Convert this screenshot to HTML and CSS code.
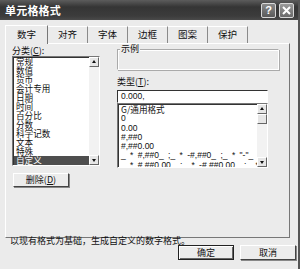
FILE: index.html
```html
<!DOCTYPE html>
<html lang="zh">
<head>
<meta charset="utf-8">
<title>单元格格式</title>
<link rel="stylesheet" href="styles.css">
</head>
<body>
<div class="window">
  <div class="titlebar">
    <span class="title">单元格格式</span>
    <div class="tbtns">
      <span class="tbtn">?</span>
      <span class="tbtn tclose">
        <svg width="11" height="11" viewBox="0 0 11 11"><path d="M2 2 L9 9 M9 2 L2 9" stroke="#fff" stroke-width="2"/></svg>
      </span>
    </div>
  </div>
  <div class="body">
    <div class="tabs">
      <span class="tab active">数字</span>
      <span class="tab">对齐</span>
      <span class="tab">字体</span>
      <span class="tab">边框</span>
      <span class="tab">图案</span>
      <span class="tab">保护</span>
    </div>
    <div class="panel">
      <div class="cols">
        <div class="left">
          <div class="label">分类(<u>C</u>):</div>
          <div class="listbox cat">
            <ul class="items">
              <li>常规</li><li>数值</li><li>货币</li><li>会计专用</li><li>日期</li><li>时间</li>
              <li>百分比</li><li>分数</li><li>科学记数</li><li>文本</li><li>特殊</li><li class="sel">自定义</li>
            </ul>
            <div class="sbar">
              <span class="arrow up"></span>
              <span class="track"></span>
              <span class="arrow down"></span>
            </div>
          </div>
          <button class="btn del">删除(<u>D</u>)</button>
        </div>
        <div class="right">
          <div class="sample"><span class="legend">示例</span></div>
          <div class="label type">类型(<u>T</u>):</div>
          <div class="input">0.000,</div>
          <div class="listbox types">
            <ul class="items mono">
              <li class="focus">G/通用格式</li>
              <li>0</li>
              <li>0.00</li>
              <li>#,##0</li>
              <li>#,##0.00</li>
              <li>_ * #,##0_ ;_ * -#,##0_ ;_ * "-"_ ;_ @_</li>
              <li>_ * #,##0.00_ ;_ * -#,##0.00_ ;_ * "-"??_ ;_ @_</li>
            </ul>
            <div class="sbar">
              <span class="arrow up"></span>
              <span class="thumb"></span>
              <span class="track"></span>
              <span class="arrow down"></span>
            </div>
          </div>
        </div>
      </div>
      <p class="desc">以现有格式为基础，生成自定义的数字格式。</p>
    </div>
    <div class="footer">
      <button class="btn ok">确定</button>
      <button class="btn">取消</button>
    </div>
  </div>
</div>
</body>
</html>
```

FILE: styles.css
```css
* { box-sizing: border-box; }
html, body { margin: 0; padding: 0; }
body {
  width: 300px; height: 269px; overflow: hidden;
  font-family: "Noto Sans CJK SC", "Liberation Sans", sans-serif;
  font-size: 9px; color: #111;
  background: #e9e9e9;
}
.window {
  width: 300px; height: 269px;
  background: #ebebeb;
  border-right: 2px solid #555;
  display: flex; flex-direction: column;
}
.titlebar {
  height: 20px;
  background: linear-gradient(#5c5c5c, #353535 35%, #3c3c3c 80%, #4a4a4a);
  display: flex; align-items: center; justify-content: space-between;
  padding: 0 4px 0 5px;
}
.title { color: #fff; font-size: 11px; font-weight: bold; letter-spacing: 0.2px; line-height: 1; }
.tbtns { display: flex; gap: 3px; }
.tbtn {
  width: 15px; height: 15px;
  border: 1px solid #d8d8d8; border-radius: 2px;
  background: linear-gradient(#8a8a8a, #5a5a5a);
  color: #fff; font: bold 11px "Liberation Sans", sans-serif;
  display: flex; align-items: center; justify-content: center;
}
.tclose { background: linear-gradient(#9a9a9a, #6a6a6a); }
.body { flex: 1; padding: 4px 8px 0 5px; display: flex; flex-direction: column; }
.tabs { display: flex; height: 19px; align-items: flex-end; }
.tab {
  width: 40px; height: 17px;
  display: flex; align-items: center; justify-content: center;
  border-right: 1px solid #8a8a8a; border-top: 1px solid #fff;
  font-size: 9.5px; padding-bottom: 2px;
}
.tab.active {
  width: 43px; height: 19px; background: #ebebeb;
  border-left: 1px solid #fff; border-right: 1px solid #777;
  margin-bottom: -1px; position: relative; z-index: 1;
}
.panel {
  height: 195px;
  border: 1px solid; border-color: #fff #777 #777 #fff;
  padding: 2px 0 0 6px;
  display: flex; flex-direction: column;
}
.cols { display: flex; gap: 17px; }
.left { width: 88px; display: flex; flex-direction: column; }
.right { width: 162px; display: flex; flex-direction: column; }
.label { height: 9px; line-height: 9px; margin-bottom: 1px; white-space: nowrap; }
.listbox {
  display: flex; background: #fff;
  border: 1px solid; border-color: #777 #fff #fff #777;
  box-shadow: inset 1px 1px 0 #333;
}
.cat { height: 110px; }
.items { list-style: none; margin: 0; padding: 1px 0 0 1px; flex: 1; overflow: hidden; min-width: 0; }
.cat .items { padding-top: 0; }
.items li { height: 9px; line-height: 9px; padding-left: 2px; white-space: nowrap; font-size: 8.6px; }
.items li.sel { background: #4e4e4e; color: #fff; }
.sbar { width: 10px; flex: none; display: flex; flex-direction: column; background: #f2f2f2; }
.sbar .track { flex: 1; }
.arrow {
  height: 10px; background: #e6e6e6;
  border: 1px solid; border-color: #fff #666 #666 #fff;
  display: flex; align-items: center; justify-content: center;
}
.arrow::after { content: ""; border: 2px solid transparent; }
.arrow.up::after { border-bottom: 3px solid #111; margin-top: -3px; }
.arrow.down::after { border-top: 3px solid #111; margin-bottom: -3px; }
.thumb { height: 10px; background: #e6e6e6; border: 1px solid; border-color: #fff #666 #666 #fff; }
.btn {
  font: 9px "Noto Sans CJK SC", sans-serif; color: #111;
  background: #ececec;
  border: 1px solid; border-color: #fff #444 #444 #fff;
  box-shadow: 1px 1px 0 #888;
  padding: 0; height: 14px; line-height: 12px;
}
.del { width: 56px; margin-top: 7px; margin-left: 1px; }
.sample {
  position: relative;
  height: 21px; width: 162px; margin-top: 3px;
  border: 1px solid; border-color: #aaa #fff #fff #aaa;
  box-shadow: inset 1px 1px 0 #fff, 1px 1px 0 #aaa;
}
.sample .legend {
  position: absolute; left: 2px; top: -6px;
  background: #ebebeb; padding: 0 1px; line-height: 10px; font-size: 9px;
}
.type { margin-top: 7px; margin-bottom: 4px; }
.input {
  width: 151px; height: 13px;
  background: #fff;
  border: 1px solid; border-color: #333 #fff #fff #333;
  font: 8.5px "Liberation Sans", sans-serif; line-height: 11px; padding-left: 3px;
}
.types { width: 151px; height: 65px; }
.mono li { font: 8.5px "Liberation Sans", "Noto Sans CJK SC", sans-serif; line-height: 9.3px; height: 9.3px; word-spacing: 2px; }
.mono li.focus { font-family: "Noto Sans CJK SC", sans-serif; font-size: 8.6px; word-spacing: 0; }
.desc { margin: 49px 0 0 -2px; line-height: 10px; height: 10px; white-space: nowrap; }
.footer { display: flex; justify-content: flex-end; gap: 6px; margin-top: 7px; margin-right: -6px; }
.footer .btn { width: 56px; height: 15px; }
.ok { border: 1px solid #222; box-shadow: inset 1px 1px 0 #fff, inset -1px -1px 0 #666; }
```
